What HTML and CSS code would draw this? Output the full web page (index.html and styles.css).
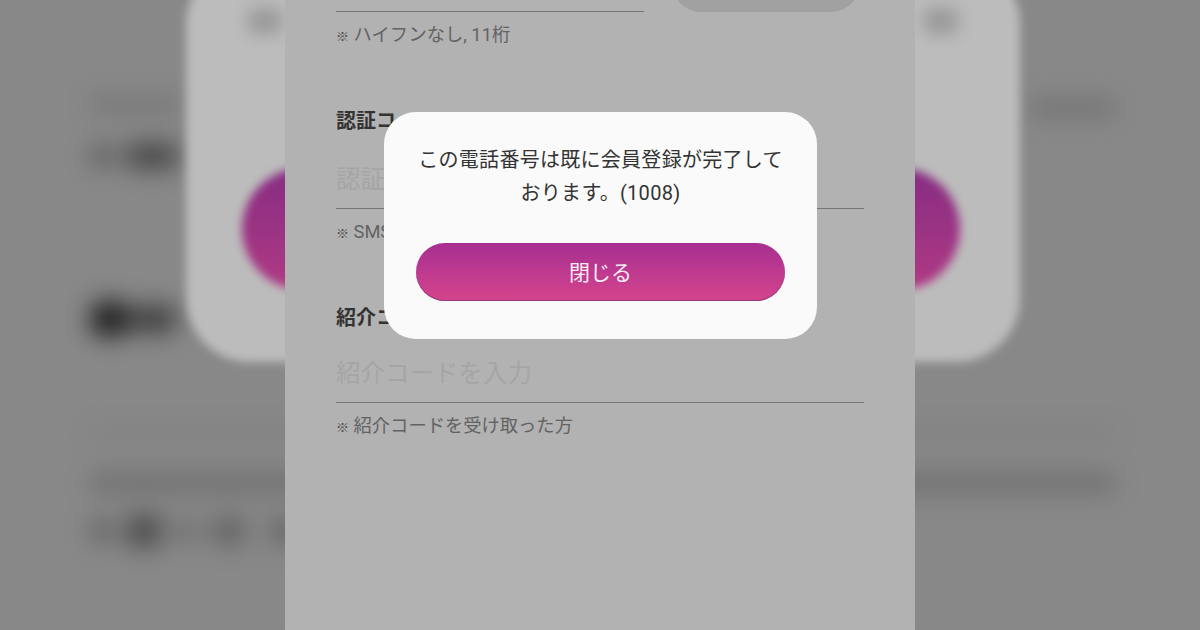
FILE: index.html
```
<!DOCTYPE html>
<html lang="ja">
<head>
<meta charset="utf-8">
<title>会員登録</title>
<link rel="stylesheet" href="styles.css">
</head>
<body>
<div class="backdrop" aria-hidden="true">
  <div class="page-rows">
    <div class="blob row-a"></div>
    <div class="row-b"><span class="blob b1"></span><span class="blob b2"></span></div>
    <div class="row-c"><span class="blob c1"></span><span class="blob c2"></span></div>
    <div class="blob row-d"></div>
    <div class="blob row-e"></div>
    <div class="row-f"><span class="blob f1"></span><span class="blob f2"></span><span class="blob f3"></span><span class="blob f4"></span><span class="blob f5"></span></div>
  </div>
  <div class="blob right-blob"></div>
  <div class="card">
    <div class="card-icons"><span class="blob icon"></span><span class="blob icon"></span></div>
    <div class="pill"></div>
  </div>
</div>

<main class="panel">
  <div class="top-row">
    <div class="top-input"></div>
    <div class="top-button"></div>
  </div>
  <p class="hint hint-first"><span class="mark">※</span> ハイフンなし, 11桁</p>
  <h2 class="label label-first">認証コード</h2>
  <div class="field">認証コードを入力</div>
  <p class="hint"><span class="mark">※</span> SMSで届いた認証コード</p>
  <h2 class="label label-second">紹介コード</h2>
  <div class="field field-second">紹介コードを入力</div>
  <p class="hint"><span class="mark">※</span> 紹介コードを受け取った方</p>
</main>

<div class="modal">
  <p class="message">この電話番号は既に会員登録が完了しております。(1008)</p>
  <button class="close" type="button">閉じる</button>
</div>
</body>
</html>
```
FILE: styles.css
```
* { box-sizing: border-box; }
html, body { margin: 0; height: 630px; }
body {
  position: relative;
  width: 1200px;
  height: 630px;
  overflow: hidden;
  background: #888888;
  font-family: Roboto, "Noto Sans CJK JP", sans-serif;
}

/* Blurred screen behind the panel */
.backdrop {
  position: absolute;
  inset: 0;
  background: #888888;
  filter: blur(5px);
}
.blob { display: block; background: #6e6e6e; border-radius: 8px; }
.page-rows {
  display: flex;
  flex-direction: column;
  padding: 98px 0 0 90px;
  filter: blur(11px);
}
.row-a { width: 90px; height: 14px; background: #747474; }
.row-b { display: flex; gap: 10px; align-items: center; height: 24px; margin-top: 32px; }
.b1 { width: 26px; height: 20px; background: #5c5c5c; }
.b2 { width: 52px; height: 26px; background: #484848; }
.row-c { display: flex; gap: 2px; align-items: center; height: 36px; margin-top: 133px; }
.c1 { width: 40px; height: 36px; background: #222222; border-radius: 14px; }
.c2 { width: 44px; height: 28px; background: #404040; }
.row-d { width: 1025px; height: 6px; margin-top: 93px; background: #7a7a7a; }
.row-e { width: 1025px; height: 22px; margin-top: 36px; background: #727272; }
.row-f { display: flex; gap: 12px; margin-top: 20px; align-items: center; }
.f1 { width: 24px; height: 24px; background: #646464; }
.f2 { width: 36px; height: 34px; background: #505050; }
.f3 { width: 26px; height: 22px; background: #6e6e6e; }
.f4 { width: 34px; height: 28px; background: #646464; }
.f5 { width: 28px; height: 26px; margin-left: 12px; background: #646464; }
.right-blob {
  position: absolute;
  left: 1030px;
  top: 100px;
  width: 85px;
  height: 16px;
  background: #707070;
  filter: blur(11px);
}
.card {
  position: absolute;
  left: 186px;
  top: -40px;
  width: 834px;
  height: 402px;
  padding: 48px 56px 0;
  background: #bcbcbc;
  border-radius: 64px;
}
.card-icons {
  display: flex;
  justify-content: space-between;
  padding: 0 6px;
  height: 160px;
}
.icon { width: 34px; height: 26px; background: #999999; filter: blur(7px); }
.pill {
  width: 718px;
  height: 122px;
  border-radius: 61px;
  background: linear-gradient(180deg, #862c82, #b03a84);
}

/* Visible form column */
.panel {
  position: absolute;
  left: 285px;
  top: 0;
  width: 630px;
  height: 630px;
  padding: 0 51px;
  background: #b2b2b2;
}
.top-row {
  display: flex;
  justify-content: space-between;
  align-items: flex-start;
  height: 12px;
  overflow: hidden;
}
.top-input { width: 308px; height: 12px; border-bottom: 1px solid #767676; }
.top-button {
  flex: none;
  width: 188px;
  height: 58px;
  margin-top: -46px;
  margin-right: 4px;
  background: #a1a1a1;
  border-radius: 29px;
}
.hint {
  height: 24px;
  margin: 11px 0 0;
  font-size: 18.3px;
  line-height: 24px;
  color: #626262;
}
.mark { font-size: 13px; font-weight: 700; color: #4e4e4e; }
.label {
  margin: 0;
  font-size: 20px;
  line-height: 28px;
  font-weight: 700;
  color: #333333;
}
.label-first { margin-top: 60px; }
.label-second { margin-top: 60px; }
.field {
  height: 74px;
  padding-top: 27px;
  font-size: 24.5px;
  line-height: 36px;
  color: #a5a5a5;
  border-bottom: 1px solid #767676;
}
.field-second { height: 71px; padding-top: 24px; }

/* Alert */
.modal {
  position: absolute;
  left: 384px;
  top: 112px;
  width: 433px;
  height: 227px;
  padding: 32px 32px 0;
  background: #fafafa;
  border-radius: 32px;
}
.message {
  margin: 0;
  font-size: 20px;
  line-height: 33px;
  letter-spacing: 0.28px;
  text-align: center;
  color: #333333;
}
.close {
  display: block;
  width: 369px;
  height: 58px;
  margin-top: 33px;
  padding: 0 0 3px;
  border: 0;
  border-radius: 29px;
  background: linear-gradient(180deg, #a72f91, #d5448c);
  box-shadow: inset 0 -1px 0 #8e3a7c;
  font-family: inherit;
  font-size: 21px;
  color: #f8eef6;
}
```
